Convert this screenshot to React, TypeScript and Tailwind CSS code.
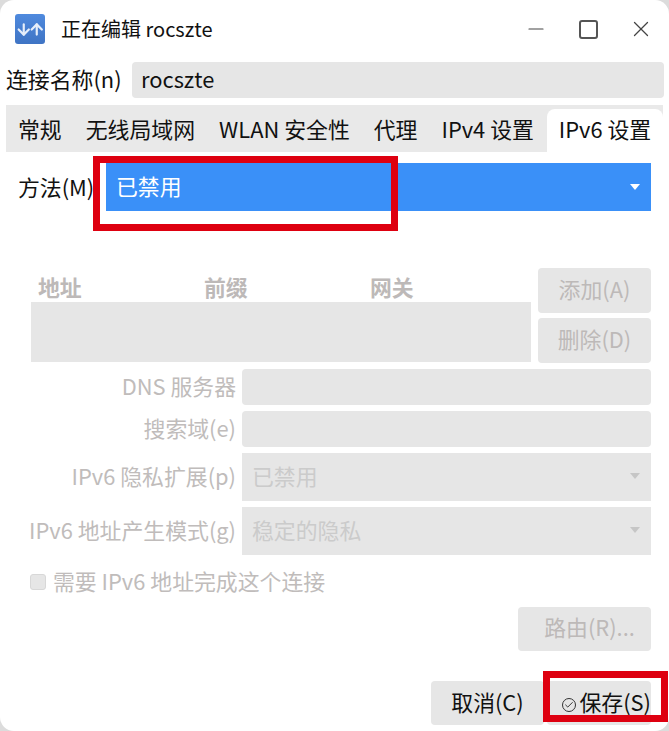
import React from 'react';
import { ArrowDown, ArrowUp, Check, Minus, X } from 'lucide-react';

const Caret = ({ className }: { className: string }) => (
  <svg width="10" height="6" viewBox="0 0 10 6" className={className}>
    <path d="M0 0h10L5 6z" fill="currentColor" />
  </svg>
);

const FormRow = ({ label, height, children }: { label: string; height: string; children: React.ReactNode }) => (
  <div className={`flex items-center ${height}`}>
    <div className="w-[236px] whitespace-nowrap pb-[2px] text-right text-[#c0bcbb]">{label}</div>
    <div className="ml-[6px] h-full w-[409px]">{children}</div>
  </div>
);

const DisabledSelect = ({ value }: { value: string }) => (
  <div className="flex h-full items-center justify-between bg-[#e6e6e6] pb-[2px] pl-[10px] pr-[11px] text-[#cbcbcb]">
    <span>{value}</span>
    <Caret className="text-[#c6c6c6]" />
  </div>
);

export default function App() {
  return (
    <div
      className="relative h-[731px] w-[669px] overflow-hidden bg-[#dcdcdc] text-[21.87px] leading-[28px] text-[#111]"
      style={{ fontFamily: '"Noto Sans CJK SC", "Noto Sans", sans-serif' }}
    >
      <div className="h-full w-full rounded-[14px] bg-white">
        {/* title bar */}
        <div className="flex h-[62px] items-center pb-[4px] pl-[15px]">
          <div className="flex h-[30px] w-[30px] items-center justify-center rounded-[3px] bg-gradient-to-b from-[#4f8ade] to-[#3f74c4] text-[#e6eefa]">
            <ArrowDown size={19} strokeWidth={3} className="-mr-[5px]" />
            <ArrowUp size={19} strokeWidth={3} />
          </div>
          <span className="ml-[16px] text-[20px]">正在编辑 rocszte</span>
          <div className="ml-auto mr-[15px] flex items-center text-[#444]">
            <Minus size={24} strokeWidth={1.2} />
            <div className="ml-[31px] h-[19px] w-[19px] rounded-[3px] border-2 border-[#555]" />
            <X size={26} strokeWidth={1.2} className="ml-[30px]" />
          </div>
        </div>

        {/* connection name */}
        <div className="flex items-center pl-[6px]">
          <span className="w-[126px] whitespace-nowrap pb-[3px]">连接名称(n)</span>
          <div className="flex h-[36px] w-[532px] items-center rounded-[4px] bg-[#e6e6e6] pb-[3px] pl-[9px]">rocszte</div>
        </div>

        {/* tabs */}
        <div className="ml-[6px] mt-[7px] flex h-[47px] w-[657px] items-end bg-[#e9e9e9]">
          <div className="flex h-[43px] items-center gap-[24px] whitespace-nowrap pb-[4px] pl-[12px]">
            <span>常规</span>
            <span>无线局域网</span>
            <span>WLAN 安全性</span>
            <span>代理</span>
            <span>IPv4 设置</span>
          </div>
          <div className="ml-auto flex h-[43px] w-[116px] items-center justify-center whitespace-nowrap rounded-t-[8px] bg-white pb-[4px]">IPv6 设置</div>
        </div>

        {/* method */}
        <div className="mt-[12px] flex h-[48px] items-center pb-[2px] pl-[18px]">
          <span className="w-[88px] whitespace-nowrap">方法(M)</span>
          <div className="flex h-[48px] w-[545px] items-center justify-between bg-[#3a90f8] pl-[10px] pr-[11px] text-white">
            <span className="pb-[2px]">已禁用</span>
            <Caret className="text-white" />
          </div>
        </div>

        {/* address table */}
        <div className="mt-[56px] flex pl-[31px]">
          <div className="w-[500px]">
            <div className="grid h-[34px] grid-cols-[166px_166px_1fr] items-center pl-[7px] pt-[3px] font-bold text-[#bdb9b8]">
              <span>地址</span>
              <span>前缀</span>
              <span>网关</span>
            </div>
            <div className="h-[60px] bg-[#e6e6e6]" />
          </div>
          <div className="ml-[7px] flex w-[113px] flex-col gap-[5px]">
            <div className="flex h-[45px] items-center justify-center rounded-[4px] bg-[#e6e6e6] pb-[3px] text-[#bdb9b8]">添加(A)</div>
            <div className="flex h-[45px] items-center justify-center rounded-[4px] bg-[#e6e6e6] pb-[3px] text-[#bdb9b8]">删除(D)</div>
          </div>
        </div>

        {/* disabled fields */}
        <div className="mt-[6px] flex flex-col gap-[6px]">
          <FormRow label="DNS 服务器" height="h-[36px]">
            <div className="h-full rounded-[4px] bg-[#e6e6e6]" />
          </FormRow>
          <FormRow label="搜索域(e)" height="h-[36px]">
            <div className="h-full rounded-[4px] bg-[#e6e6e6]" />
          </FormRow>
          <FormRow label="IPv6 隐私扩展(p)" height="h-[48px]">
            <DisabledSelect value="已禁用" />
          </FormRow>
          <FormRow label="IPv6 地址产生模式(g)" height="h-[48px]">
            <DisabledSelect value="稳定的隐私" />
          </FormRow>
        </div>

        <div className="mt-[13px] flex h-[28px] items-center pl-[30px] text-[#c0bcbb]">
          <div className="h-[16px] w-[16px] rounded-[3px] border border-[#d8d8d8] bg-[#e6e6e6]" />
          <span className="ml-[7px] whitespace-nowrap pb-[3px]">需要 IPv6 地址完成这个连接</span>
        </div>

        <div className="mt-[11px] flex justify-end pr-[18px]">
          <div className="flex h-[44px] w-[133px] items-center justify-center whitespace-nowrap rounded-[4px] bg-[#e6e6e6] pb-[4px] pl-[10px] text-[#bdb9b8]">路由(R)...</div>
        </div>

        {/* footer buttons */}
        <div className="mt-[30px] flex justify-end pr-[18px]">
          <div className="flex h-[44px] w-[113px] items-center justify-center whitespace-nowrap rounded-[4px] bg-[#e6e6e6] pb-[2px]">取消(C)</div>
          <div className="ml-[3px] flex h-[44px] w-[104px] items-center justify-end whitespace-nowrap rounded-[4px] bg-[#e6e6e6] pb-[2px]">
            <span className="mr-[3px] mt-[6px] flex h-[14px] w-[14px] items-center justify-center rounded-full border border-[#333]">
              <Check size={10} strokeWidth={2} />
            </span>
            <span>保存(S)</span>
          </div>
        </div>
      </div>

      {/* red annotation boxes */}
      <div className="absolute left-[93px] top-[156px] h-[75px] w-[305px] border-[7px] border-[#de0010]" />
      <div className="absolute left-[543px] top-[671px] h-[51px] w-[125px] border-[7px] border-[#de0010]" />
    </div>
  );
}
